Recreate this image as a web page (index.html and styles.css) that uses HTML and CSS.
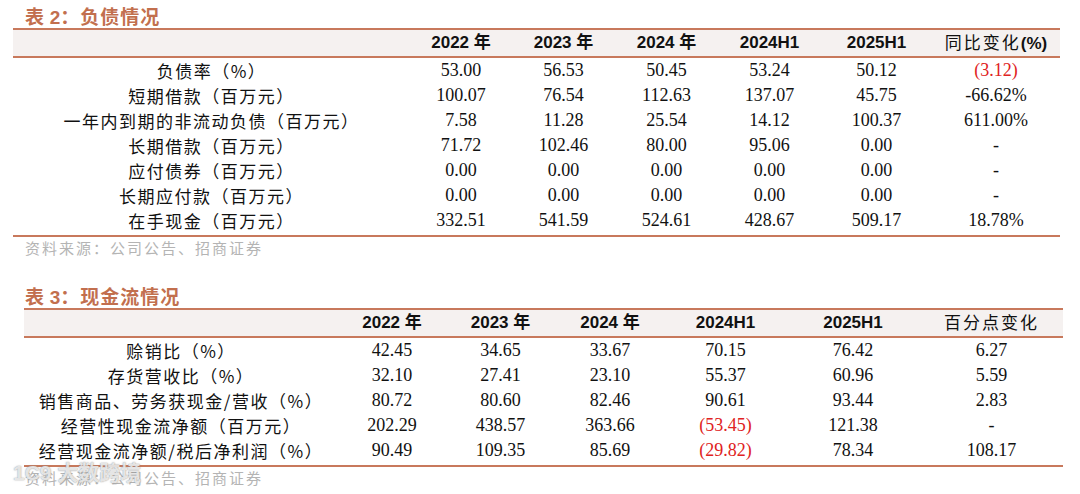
FILE: index.html
```html
<!DOCTYPE html>
<html lang="zh-CN">
<head>
<meta charset="utf-8">
<title>负债情况与现金流情况</title>
<link rel="stylesheet" href="styles.css">
</head>
<body>
<div class="page">
  <section class="block block-debt">
    <div class="title"><span class="cjk">表</span> <span class="lat">2</span><span class="cjk">：负债情况</span></div>
    <table class="tbl tbl-debt">
      <colgroup>
        <col class="c-label2"><col class="c-a2"><col class="c-b2"><col class="c-b2"><col class="c-b2"><col class="c-e2"><col class="c-f2">
      </colgroup>
      <thead>
        <tr>
          <th></th>
          <th>2022 年</th><th>2023 年</th><th>2024 年</th><th>2024H1</th><th>2025H1</th>
          <th><span class="thin">同比变化</span>(%)</th>
        </tr>
      </thead>
      <tbody>
        <tr><td class="lbl">负债率（%）</td><td>53.00</td><td>56.53</td><td>50.45</td><td>53.24</td><td>50.12</td><td class="neg">(3.12)</td></tr>
        <tr><td class="lbl">短期借款（百万元）</td><td>100.07</td><td>76.54</td><td>112.63</td><td>137.07</td><td>45.75</td><td>-66.62%</td></tr>
        <tr><td class="lbl">一年内到期的非流动负债（百万元）</td><td>7.58</td><td>11.28</td><td>25.54</td><td>14.12</td><td>100.37</td><td>611.00%</td></tr>
        <tr><td class="lbl">长期借款（百万元）</td><td>71.72</td><td>102.46</td><td>80.00</td><td>95.06</td><td>0.00</td><td>-</td></tr>
        <tr><td class="lbl">应付债券（百万元）</td><td>0.00</td><td>0.00</td><td>0.00</td><td>0.00</td><td>0.00</td><td>-</td></tr>
        <tr><td class="lbl">长期应付款（百万元）</td><td>0.00</td><td>0.00</td><td>0.00</td><td>0.00</td><td>0.00</td><td>-</td></tr>
        <tr class="last"><td class="lbl">在手现金（百万元）</td><td>332.51</td><td>541.59</td><td>524.61</td><td>428.67</td><td>509.17</td><td>18.78%</td></tr>
      </tbody>
    </table>
    <div class="source">资料来源：公司公告、招商证券</div>
  </section>

  <section class="block block-cash">
    <div class="title"><span class="cjk">表</span> <span class="lat">3</span><span class="cjk">：现金流情况</span></div>
    <table class="tbl tbl-cash">
      <colgroup>
        <col class="c-label3"><col class="c-a3"><col class="c-b3"><col class="c-c3"><col class="c-d3"><col class="c-e3"><col class="c-f3">
      </colgroup>
      <thead>
        <tr>
          <th></th>
          <th>2022 年</th><th>2023 年</th><th>2024 年</th><th>2024H1</th><th>2025H1</th>
          <th><span class="thin">百分点变化</span></th>
        </tr>
      </thead>
      <tbody>
        <tr><td class="lbl">赊销比（%）</td><td>42.45</td><td>34.65</td><td>33.67</td><td>70.15</td><td>76.42</td><td>6.27</td></tr>
        <tr><td class="lbl">存货营收比（%）</td><td>32.10</td><td>27.41</td><td>23.10</td><td>55.37</td><td>60.96</td><td>5.59</td></tr>
        <tr><td class="lbl">销售商品、劳务获现金/营收（%）</td><td>80.72</td><td>80.60</td><td>82.46</td><td>90.61</td><td>93.44</td><td>2.83</td></tr>
        <tr><td class="lbl">经营性现金流净额（百万元）</td><td>202.29</td><td>438.57</td><td>363.66</td><td class="neg">(53.45)</td><td>121.38</td><td>-</td></tr>
        <tr class="last"><td class="lbl">经营现金流净额/税后净利润（%）</td><td>90.49</td><td>109.35</td><td>85.69</td><td class="neg">(29.82)</td><td>78.34</td><td>108.17</td></tr>
      </tbody>
    </table>
    <div class="source source-wm">资料来源：公司公告、招商证券<span class="watermark">1C9 大数跨境</span></div>
  </section>
</div>
</body>
</html>
```

FILE: styles.css
```css
html, body {
  margin: 0;
  padding: 0;
  background: #ffffff;
}

body {
  width: 1080px;
  height: 494px;
  overflow: hidden;
  font-family: "Liberation Serif", "Noto Sans CJK SC", serif;
  color: #111111;
}

.page {
  padding-top: 4px;
}

.title {
  height: 24px;
  line-height: 24px;
  font-size: 19px;
  font-weight: 700;
  color: #c26f4e;
  margin-left: 25px;
  white-space: nowrap;
}

.title .cjk {
  font-family: "Noto Sans CJK SC", sans-serif;
  letter-spacing: 1px;
}

.title .lat {
  font-family: "Liberation Sans", "Noto Sans CJK SC", sans-serif;
}

.tbl {
  border-collapse: collapse;
  table-layout: fixed;
}

.tbl-debt {
  margin-left: 13px;
  width: 1047px;
}

.tbl-cash {
  margin-left: 24px;
  width: 1039px;
}

.c-label2 { width: 397px; }
.c-a2 { width: 102px; }
.c-b2 { width: 103px; }
.c-e2 { width: 111px; }
.c-f2 { width: 128px; }

.c-label3 { width: 314px; }
.c-a3 { width: 108px; }
.c-b3 { width: 109px; }
.c-c3 { width: 110px; }
.c-d3 { width: 121px; }
.c-e3 { width: 134px; }
.c-f3 { width: 143px; }

.tbl thead th {
  background: #f5f1f0;
  border-top: 2px solid #c8795c;
  border-bottom: 2px solid #c8795c;
  height: 24px;
  padding: 0;
  font-family: "Liberation Sans", "Noto Sans CJK SC", sans-serif;
  font-weight: 700;
  font-size: 17px;
  line-height: 24px;
  text-align: center;
  white-space: nowrap;
  color: #111111;
}

.tbl thead th .thin {
  font-family: "Noto Sans CJK SC", sans-serif;
  font-weight: 400;
  letter-spacing: 2px;
}

.tbl tbody td {
  height: 25px;
  padding: 0;
  font-size: 18px;
  line-height: 25px;
  text-align: center;
  white-space: nowrap;
}

.tbl tbody td.lbl {
  font-family: "Noto Sans CJK SC", sans-serif;
  font-size: 17px;
  letter-spacing: 1.5px;
}

.tbl tbody tr.last td {
  height: 27px;
  vertical-align: top;
  border-bottom: 2px solid #c8795c;
}

.neg {
  color: #e02222;
}

.source {
  position: relative;
  margin-left: 25px;
  margin-top: 0;
  height: 22px;
  line-height: 22px;
  font-family: "Noto Sans CJK SC", sans-serif;
  font-size: 15px;
  letter-spacing: 2px;
  color: #b4b4b4;
  white-space: nowrap;
}

.block-cash {
  margin-top: 25px;
}

.watermark {
  position: absolute;
  left: -12px;
  top: -5px;
  font-family: "Liberation Sans", "Noto Sans CJK SC", sans-serif;
  font-size: 21px;
  font-weight: 700;
  letter-spacing: 0;
  color: rgba(255, 255, 255, 0.75);
  text-shadow: 0 0 1px rgba(120, 120, 120, 0.7), 0 0 2px rgba(150, 150, 150, 0.5);
}
```
